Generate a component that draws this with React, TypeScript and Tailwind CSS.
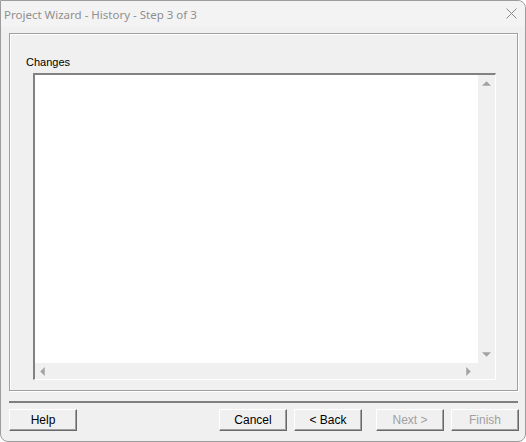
import type { ReactNode } from 'react'

function Arrow({ dir }: { dir: 'up' | 'down' | 'left' | 'right' }) {
  const pts = {
    up: '0,4 4,0 8,4',
    down: '0,0 8,0 4,4',
    left: '4,0 4,8 0,4',
    right: '0,0 0,8 4,4',
  }[dir]
  const vertical = dir === 'up' || dir === 'down'
  return (
    <svg width={vertical ? 9 : 5} height={vertical ? 5 : 9} viewBox={vertical ? '0 0 8 4' : '0 0 4 8'}>
      <polygon points={pts} fill="#a3a3a3" />
    </svg>
  )
}

function WinButton({ children, disabled, className }: { children: ReactNode; disabled?: boolean; className?: string }) {
  return (
    <button
      className={`h-[22px] w-[68px] bg-[#f0f0f0] border border-t-white border-l-white border-r-[#696969] border-b-[#696969] shadow-[inset_-1px_-1px_0_#a0a0a0] text-[12px] leading-none ${
        disabled ? 'text-[#a0a0a0]' : 'text-black'
      } ${className ?? ''}`}
    >
      {children}
    </button>
  )
}

export default function App() {
  return (
    <div
      className="flex h-[442px] w-[526px] flex-col rounded-tr-[8px] rounded-b-[8px] border border-[#9c9c9c] bg-[#f0f0f0]"
      style={{ fontFamily: '"Liberation Sans", Arial, sans-serif' }}
    >
      <div className="flex h-[26px] items-center justify-between rounded-tr-[8px] bg-[#f3f3f3] pl-[3px] pr-[8px]">
        <span className="mt-[1px] text-[11.5px] text-[#8f8f8f]" style={{ fontFamily: '"Noto Sans", "Open Sans", sans-serif' }}>
          Project Wizard - History - Step 3 of 3
        </span>
        <svg width="11" height="11" viewBox="0 0 11 11" className="mb-[1px]">
          <path d="M0.5 0.5 L10.5 10.5 M10.5 0.5 L0.5 10.5" stroke="#8a8a8a" strokeWidth="1" />
        </svg>
      </div>

      <div className="ml-[8px] mt-[6px] flex h-[358px] w-[509px] flex-col border border-[#a0a0a0] pl-[16px] pr-[20px] shadow-[inset_1px_1px_0_#fff,1px_1px_0_#fff]">
        <span className="mt-[21px] text-[11px] leading-[14px] text-black">Changes</span>
        <div className="ml-[7px] mt-[4px] flex h-[307px] w-[463px] flex-col border-t-2 border-l-2 border-r border-b border-t-[#828282] border-l-[#828282] border-r-white border-b-white">
          <div className="flex flex-1">
            <div className="flex-1 bg-white" />
            <div className="flex w-[17px] flex-col items-center justify-between bg-[#f0f0f0] py-[6px]">
              <Arrow dir="up" />
              <Arrow dir="down" />
            </div>
          </div>
          <div className="flex h-[16px] items-center justify-between bg-[#f0f0f0] pl-[5px] pr-[24px]">
            <Arrow dir="left" />
            <Arrow dir="right" />
          </div>
        </div>
      </div>

      <div className="ml-[8px] mt-[10px] h-[2px] w-[509px] bg-[#7f7f7f]" />

      <div className="ml-[8px] mt-[6px] flex">
        <WinButton>Help</WinButton>
        <WinButton className="ml-[142px]">Cancel</WinButton>
        <WinButton className="ml-[7px]">&lt; Back</WinButton>
        <WinButton className="ml-[14px]" disabled>
          Next &gt;
        </WinButton>
        <WinButton className="ml-[7px]" disabled>
          Finish
        </WinButton>
      </div>
    </div>
  )
}
